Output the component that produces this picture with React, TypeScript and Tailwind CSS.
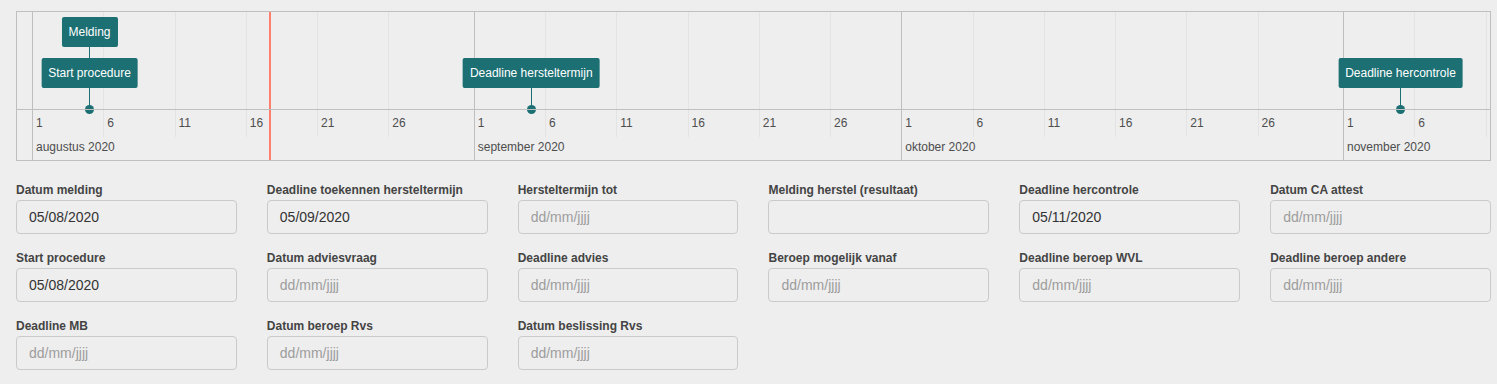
import React from 'react';

// px per day on the timeline axis, origin = 1 augustus 2020
const DAY = 14.25;
const LAST_VISIBLE_DAY = 102;
const MONTHS = [
    { name: 'augustus 2020', start: 0, days: 31 },
    { name: 'september 2020', start: 31, days: 30 },
    { name: 'oktober 2020', start: 61, days: 31 },
    { name: 'november 2020', start: 92, days: 30 },
];

const xOf = (d: number) => d * DAY - 1;

type Item = { label: string; day: number; row: number };

const ITEMS: Item[] = [
    { label: 'Start procedure', day: 4, row: 0 },
    { label: 'Melding', day: 4, row: 1 },
    { label: 'Deadline hersteltermijn', day: 35, row: 0 },
    { label: 'Deadline hercontrole', day: 96, row: 0 },
];

const TEAL = 'bg-[#1c6f73]';

function Timeline() {
    const ticks: { d: number; label: string; major: boolean }[] = [];
    MONTHS.forEach((m) => {
        [1, 6, 11, 16, 21, 26].forEach((day) => {
            const d = m.start + day - 1;
            if (day <= m.days && d <= LAST_VISIBLE_DAY) ticks.push({ d, label: String(day), major: day === 1 });
        });
    });

    return (
        <div className="relative flex h-[150px] border border-[#bfbfbf]">
            {/* left label panel */}
            <div className="w-4 shrink-0 border-r border-[#bfbfbf]" />

            {/* center canvas */}
            <div className="relative flex-1 overflow-hidden">
                {ticks.map((t) => (
                    <React.Fragment key={t.d}>
                        <div
                            className={t.major ? 'absolute top-0 bottom-0 w-px bg-[#bfbfbf]' : 'absolute top-0 h-[125px] w-px bg-[#e3e3e3]'}
                            style={{ left: xOf(t.d) }}
                        />
                        <div
                            className="absolute top-[103px] text-[12px] leading-4 text-[#4d4d4d]"
                            style={{ left: xOf(t.d) + 4 }}
                        >
                            {t.label}
                        </div>
                    </React.Fragment>
                ))}
                {MONTHS.map((m) => (
                    <div
                        key={m.name}
                        className="absolute top-[127px] text-[12px] leading-4 whitespace-nowrap text-[#4d4d4d]"
                        style={{ left: xOf(m.start) + 4 }}
                    >
                        {m.name}
                    </div>
                ))}

                {/* items */}
                {ITEMS.map((it) => {
                    const x = xOf(it.day);
                    const top = it.row === 0 ? 46 : 5;
                    const lineTop = top + 30;
                    const lineEnd = it.row === 0 ? 97 : 46;
                    return (
                        <React.Fragment key={it.label}>
                            <div className={`absolute w-px ${TEAL}`} style={{ left: x, top: lineTop, height: lineEnd - lineTop }} />
                            <div
                                className={`absolute h-[30px] -translate-x-1/2 rounded-[2px] px-[7px] text-[12px] leading-[30px] whitespace-nowrap text-white ${TEAL}`}
                                style={{ left: x + 0.5, top }}
                            >
                                {it.label}
                            </div>
                            {it.row === 0 && (
                                <div className={`absolute h-[9px] w-[9px] rounded-full ${TEAL}`} style={{ left: x - 4, top: 93 }} />
                            )}
                        </React.Fragment>
                    );
                })}

                {/* current time */}
                <div className="absolute top-0 bottom-0 left-[236px] w-[2px] bg-[#FF7F6E]" />
            </div>

            {/* axis line across both panels */}
            <div className="pointer-events-none absolute left-0 right-0 top-[97px] h-px bg-[#bfbfbf]" />
        </div>
    );
}

type Field = { label: string; value?: string; placeholder?: boolean };

const FIELDS: Field[] = [
    { label: 'Datum melding', value: '05/08/2020' },
    { label: 'Deadline toekennen hersteltermijn', value: '05/09/2020' },
    { label: 'Hersteltermijn tot', placeholder: true },
    { label: 'Melding herstel (resultaat)' },
    { label: 'Deadline hercontrole', value: '05/11/2020' },
    { label: 'Datum CA attest', placeholder: true },
    { label: 'Start procedure', value: '05/08/2020' },
    { label: 'Datum adviesvraag', placeholder: true },
    { label: 'Deadline advies', placeholder: true },
    { label: 'Beroep mogelijk vanaf', placeholder: true },
    { label: 'Deadline beroep WVL', placeholder: true },
    { label: 'Deadline beroep andere', placeholder: true },
    { label: 'Deadline MB', placeholder: true },
    { label: 'Datum beroep Rvs', placeholder: true },
    { label: 'Datum beslissing Rvs', placeholder: true },
];

function DateField({ field }: { field: Field }) {
    return (
        <div className="flex flex-col">
            <label className="mb-px text-[12px] leading-[18px] font-bold whitespace-nowrap text-[#444]">{field.label}</label>
            <div className="flex h-[34px] items-center rounded-[4px] border border-[#cacaca] bg-[#eeeeee] px-3 text-[14px]">
                {field.value && <span className="text-[#333]">{field.value}</span>}
                {field.placeholder && (
                    <span className="text-[#9d9d9d]">
                        dd/mm/<span className="underline decoration-[#aaa] underline-offset-2">jjjj</span>
                    </span>
                )}
            </div>
        </div>
    );
}

export default function App() {
    return (
        <div className="min-h-[384px] bg-[#eeeeee] pt-[11px] pr-[6px] pl-4 font-['Liberation_Sans',Arial,sans-serif]">
            <Timeline />
            <div className="mt-5 grid grid-cols-6 gap-x-[30px] gap-y-[15px]">
                {FIELDS.map((f) => (
                    <DateField key={f.label} field={f} />
                ))}
            </div>
        </div>
    );
}
